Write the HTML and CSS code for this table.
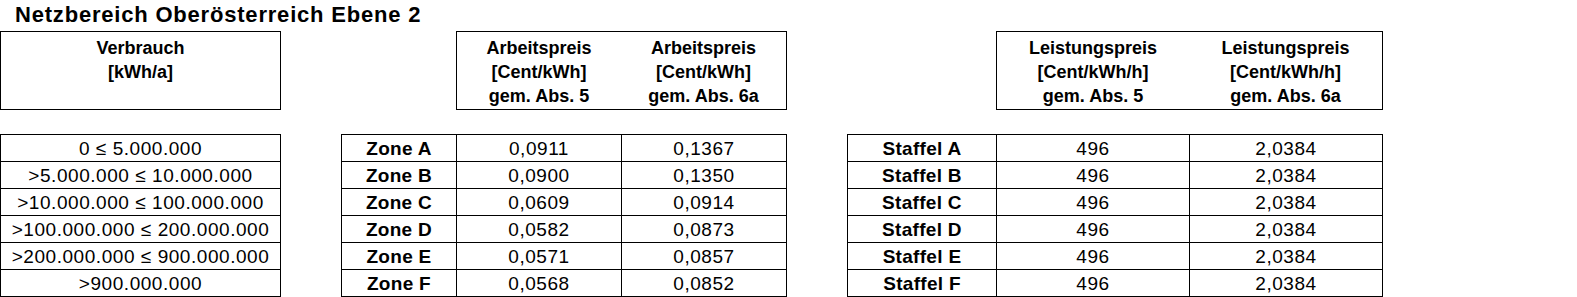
FILE: index.html
```html
<!DOCTYPE html>
<html lang="de">
<head>
<meta charset="utf-8">
<title>Netzbereich Oberösterreich Ebene 2</title>
<link rel="stylesheet" href="styles.css">
</head>
<body>
<h1 class="title">Netzbereich Oberösterreich Ebene 2</h1>
<div class="groups">
  <section class="group g1">
    <div class="head head-1">
      <div class="hcell">Verbrauch<br>[kWh/a]</div>
    </div>
    <div class="tbl tbl-1">
      <div class="cell">0 ≤ 5.000.000</div>
      <div class="cell">&gt;5.000.000 ≤ 10.000.000</div>
      <div class="cell">&gt;10.000.000 ≤ 100.000.000</div>
      <div class="cell">&gt;100.000.000 ≤ 200.000.000</div>
      <div class="cell">&gt;200.000.000 ≤ 900.000.000</div>
      <div class="cell">&gt;900.000.000</div>
    </div>
  </section>
  <section class="group g2">
    <div class="head head-2">
      <div class="hcell">Arbeitspreis<br>[Cent/kWh]<br>gem. Abs. 5</div>
      <div class="hcell">Arbeitspreis<br>[Cent/kWh]<br>gem. Abs. 6a</div>
    </div>
    <div class="tbl tbl-2">
      <div class="cell lbl">Zone A</div><div class="cell">0,0911</div><div class="cell">0,1367</div>
      <div class="cell lbl">Zone B</div><div class="cell">0,0900</div><div class="cell">0,1350</div>
      <div class="cell lbl">Zone C</div><div class="cell">0,0609</div><div class="cell">0,0914</div>
      <div class="cell lbl">Zone D</div><div class="cell">0,0582</div><div class="cell">0,0873</div>
      <div class="cell lbl">Zone E</div><div class="cell">0,0571</div><div class="cell">0,0857</div>
      <div class="cell lbl">Zone F</div><div class="cell">0,0568</div><div class="cell">0,0852</div>
    </div>
  </section>
  <section class="group g3">
    <div class="head head-3">
      <div class="hcell">Leistungspreis<br>[Cent/kWh/h]<br>gem. Abs. 5</div>
      <div class="hcell">Leistungspreis<br>[Cent/kWh/h]<br>gem. Abs. 6a</div>
    </div>
    <div class="tbl tbl-3">
      <div class="cell lbl">Staffel A</div><div class="cell">496</div><div class="cell">2,0384</div>
      <div class="cell lbl">Staffel B</div><div class="cell">496</div><div class="cell">2,0384</div>
      <div class="cell lbl">Staffel C</div><div class="cell">496</div><div class="cell">2,0384</div>
      <div class="cell lbl">Staffel D</div><div class="cell">496</div><div class="cell">2,0384</div>
      <div class="cell lbl">Staffel E</div><div class="cell">496</div><div class="cell">2,0384</div>
      <div class="cell lbl">Staffel F</div><div class="cell">496</div><div class="cell">2,0384</div>
    </div>
  </section>
</div>
</body>
</html>
```
FILE: styles.css
```css
* { box-sizing: border-box; }
html, body {
  margin: 0;
  padding: 0;
  background: #fff;
  color: #000;
  font-family: "Liberation Sans", Arial, sans-serif;
}
.title {
  margin: 0;
  padding: 0 0 0 15px;
  height: 31px;
  font-size: 22px;
  line-height: 30px;
  font-weight: bold;
  letter-spacing: 0.8px;
  white-space: nowrap;
}
.groups {
  display: flex;
  gap: 60px;
  align-items: flex-start;
}
.group {
  display: flex;
  flex-direction: column;
  gap: 24px;
}
.g1 { width: 281px; }
.g2 { width: 446px; }
.g3 { width: 536px; }

.head {
  height: 79px;
  border: 1px solid #000;
  display: grid;
  padding-top: 4px;
  font-size: 18px;
  line-height: 24px;
  font-weight: bold;
  text-align: center;
}
.head-1 { grid-template-columns: 1fr; }
.head-2 { margin-left: 115px; grid-template-columns: 164px 165px; }
.head-3 { margin-left: 149px; grid-template-columns: 192px 193px; }
.hcell { white-space: nowrap; }

.tbl {
  display: grid;
  border-top: 1px solid #000;
  border-left: 1px solid #000;
}
.tbl-1 { grid-template-columns: 280px; }
.tbl-2 { grid-template-columns: 115px 165px 165px; }
.tbl-3 { grid-template-columns: 149px 193px 193px; }
.cell {
  height: 27px;
  border-right: 1px solid #000;
  border-bottom: 1px solid #000;
  padding-top: 1px;
  font-size: 19px;
  line-height: 26px;
  letter-spacing: 0.55px;
  text-align: center;
  white-space: nowrap;
}
.cell.lbl {
  font-weight: bold;
  letter-spacing: 0.3px;
}
```
